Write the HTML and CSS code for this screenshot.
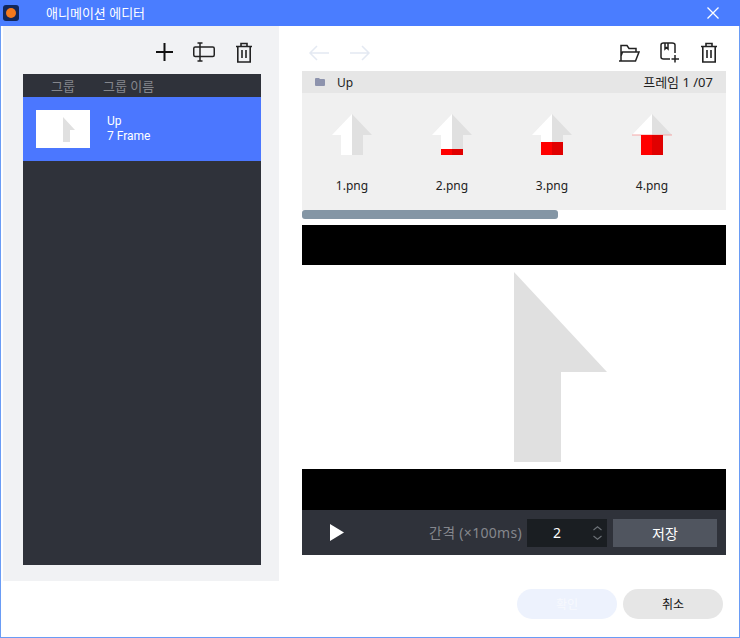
FILE: index.html
```html
<!DOCTYPE html>
<html lang="ko">
<head>
  <meta charset="UTF-8">
  <title>애니메이션 에디터</title>
  <link rel="stylesheet" href="styles.css">
</head>
<body>
  <div class="window">
    <header class="titlebar">
      <div class="app-icon"><span class="app-dot"></span></div>
      <span class="title">애니메이션 에디터</span>
      <svg class="close" width="14" height="14" viewBox="0 0 14 14"><path d="M1.5 1.5l11 11M12.500 1.500l-11 11" stroke="#fff" stroke-width="1.300" fill="none"/></svg>
    </header>

    <div class="main">
      <!-- group list -->
      <aside class="left">
        <div class="left-tools">
          <svg width="20" height="20" viewBox="0 0 20 20"><path d="M9.500 1v18M1 10h17" stroke="#111" stroke-width="2" fill="none"/></svg>
          <svg width="22" height="20" viewBox="0 0 22 20"><rect x=".75" y="5" width="20.500" height="9.500" rx="1.500" fill="none" stroke="#222" stroke-width="1.500"/><path d="M7 1v18M4.500 1h5M4.500 19h5" stroke="#222" stroke-width="1.500" fill="none"/></svg>
          <svg class="left-trash" width="18" height="21" viewBox="0 0 18 21"><path d="M1 4.500h16M6 4V1.500h6V4M2.800 4.500V20h12.400V4.500M7 8v8M11 8v8" stroke="#222" stroke-width="1.600" fill="none"/></svg>
        </div>
        <div class="group-list">
          <div class="group-head">
            <span class="col-group">그룹</span>
            <span class="col-name">그룹 이름</span>
          </div>
          <div class="group-row">
            <div class="group-thumb">
              <svg width="12" height="25" viewBox="0 0 12 25"><path d="M0 0L12 13H7V25H0Z" fill="#e0e0e0"/></svg>
            </div>
            <div class="group-text">Up<br>7 Frame</div>
          </div>
        </div>
      </aside>

      <section class="right">
        <div class="right-tools">
          <svg width="22" height="16" viewBox="0 0 22 16"><path d="M21 8H2M9 1L2 8l7 7" stroke="#e4e9f2" stroke-width="1.500" fill="none"/></svg>
          <svg class="next" width="22" height="16" viewBox="0 0 22 16"><path d="M1 8h19M13 1l7 7-7 7" stroke="#e4e9f2" stroke-width="1.500" fill="none"/></svg>
          <span class="spacer"></span>
          <svg width="22" height="18" viewBox="0 0 22 18"><path d="M3 17V1.500h6l2 3h7V8M1 17h16.500L21 8H4.500L3 12" stroke="#222" stroke-width="1.500" fill="none"/></svg>
          <svg class="add" width="20" height="21" viewBox="0 0 20 21"><path d="M10 17H3.500Q1 17 1 15V3Q1 1 3.500 1H12Q15 1 15 3V11M5 1v6l1.500-1.500L8 7V1M4 1h6M15 13v7.500M11.500 17h7.500" stroke="#222" stroke-width="1.500" fill="none"/></svg>
          <svg class="trash" width="18" height="21" viewBox="0 0 18 21"><path d="M1 4.500h16M6 4V1.500h6V4M2.800 4.500V20h12.400V4.500M7 8v8M11 8v8" stroke="#222" stroke-width="1.600" fill="none"/></svg>
        </div>

        <div class="strip-head">
          <svg width="10" height="8" viewBox="0 0 10 8"><path d="M0 1q0-1 1-1h3l1 1h4q1 0 1 1v5q0 1-1 1H1Q0 8 0 7Z" fill="#8d93ad"/></svg>
          <span class="strip-name">Up</span>
          <span class="strip-count">프레임 1 /07</span>
        </div>

        <div class="frames">
          <div class="frame">
            <svg class="frame-arrow" width="40" height="41" viewBox="0 0 40 41"><path d="M20 0L0 21H9V41H20Z" fill="#fff"/><path d="M20 0L40 21H31V41H20Z" fill="#e0e0e0"/></svg>
            <span>1.png</span>
          </div>
          <div class="frame">
            <svg class="frame-arrow" width="40" height="41" viewBox="0 0 40 41"><path d="M20 0L0 21H9V41H20Z" fill="#fff"/><path d="M20 0L40 21H31V41H20Z" fill="#e0e0e0"/><path d="M9 35H20V41H9Z" fill="#f00"/><path d="M20 35H31V41H20Z" fill="#e00000"/></svg>
            <span>2.png</span>
          </div>
          <div class="frame">
            <svg class="frame-arrow" width="40" height="41" viewBox="0 0 40 41"><path d="M20 0L0 21H9V41H20Z" fill="#fff"/><path d="M20 0L40 21H31V41H20Z" fill="#e0e0e0"/><path d="M9 28H20V41H9Z" fill="#f00"/><path d="M20 28H31V41H20Z" fill="#e00000"/></svg>
            <span>3.png</span>
          </div>
          <div class="frame">
            <svg class="frame-arrow" width="40" height="41" viewBox="0 0 40 41"><path d="M20 0L0 21H9V41H20Z" fill="#fff"/><path d="M20 0L40 21H31V41H20Z" fill="#e0e0e0"/><path d="M0 21H40" stroke="#f5a8a8" stroke-width="1"/><path d="M9 21H20V41H9Z" fill="#f00"/><path d="M20 21H31V41H20Z" fill="#e00000"/></svg>
            <span>4.png</span>
          </div>
        </div>
        <div class="scroll"><div class="scroll-thumb"></div></div>

        <div class="bar-top"></div>
        <div class="preview">
          <svg width="93" height="190" viewBox="0 0 93 190"><path d="M0 0L93 100H47V190H0Z" fill="#e0e0e0"/></svg>
        </div>
        <div class="bar-bottom"></div>

        <div class="controls">
          <svg class="play" width="14" height="17" viewBox="0 0 14 17"><path d="M0 0L14 8.500L0 17Z" fill="#fff"/></svg>
          <span class="spacer"></span>
          <span class="interval">간격 (×100ms)</span>
          <div class="stepper">
            <span class="step-value">2</span>
            <svg width="9" height="14" viewBox="0 0 9 14"><path d="M.5 4L4.500 .8l4 3.200M.5 10l4 3.200 4-3.200" stroke="#6d7278" stroke-width="1.100" fill="none"/></svg>
          </div>
          <button class="save">저장</button>
        </div>
      </section>
    </div>

    <footer class="footer">
      <button class="btn btn-ok">확인</button>
      <button class="btn btn-cancel">취소</button>
    </footer>
  </div>
</body>
</html>
```

FILE: styles.css
```css
* {
  box-sizing: border-box;
}
html, body {
  margin: 0;
  padding: 0;
}
body {
  width: 740px;
  height: 638px;
  overflow: hidden;
  background: #fff;
  font-family: "Noto Sans", "Noto Sans CJK KR", sans-serif;
  font-size: 12px;
}
svg {
  display: block;
  flex: none;
}
.window {
  height: 638px;
  border: 1px solid #6a9cf5;
  border-top: 0;
  display: flex;
  flex-direction: column;
}
.titlebar {
  height: 26px;
  margin: 0 -1px;
  background: #4a7dff;
  color: #fff;
  display: flex;
  align-items: center;
  padding: 0 20px 0 3px;
}
.app-icon {
  width: 16px;
  height: 16px;
  border-radius: 3px;
  background: #12275a;
  display: flex;
  align-items: center;
  justify-content: center;
}
.app-dot {
  width: 10px;
  height: 10px;
  border-radius: 50%;
  background: #f5791c;
}
.title {
  margin-left: 27px;
  flex: 1;
  font-size: 13px;
  line-height: 18px;
}
.main {
  display: flex;
  height: 555px;
}
.left {
  width: 276px;
  margin-left: 2px;
  padding: 0 18px 16px 20px;
  background: #f1f2f4;
  display: flex;
  flex-direction: column;
}
.left-tools {
  height: 48px;
  display: flex;
  align-items: center;
  justify-content: flex-end;
  gap: 18px;
  padding: 4px 8px 0 0;
}
.left-trash {
  margin-left: 2px;
}
.group-list {
  flex: 1;
  background: #2f323a;
}
.group-head {
  height: 23px;
  display: flex;
  align-items: center;
  padding-bottom: 1px;
  color: #85878d;
  font-size: 13px;
}
.col-group {
  margin-left: 28px;
}
.col-name {
  margin-left: 28px;
}
.group-row {
  height: 64px;
  background: #4b77ff;
  display: flex;
  align-items: center;
  padding-left: 13px;
  color: #fff;
}
.group-thumb {
  width: 54px;
  height: 38px;
  background: #fff;
  display: flex;
  align-items: center;
  padding-left: 27px;
}
.group-text {
  margin-left: 17px;
  font-family: Roboto, sans-serif;
  line-height: 15px;
  font-size: 12px;
  margin-top: -1px;
}
.right {
  width: 424px;
  margin-left: 23px;
  display: flex;
  flex-direction: column;
}
.right-tools {
  height: 45px;
  display: flex;
  align-items: center;
  padding: 8px 8px 0 6px;
}
.next {
  margin-left: 19px;
}
.spacer {
  flex: 1;
}
.add {
  margin-left: 20px;
}
.trash {
  margin-left: 20px;
}
.strip-head {
  height: 22px;
  background: #e6e6e6;
  display: flex;
  align-items: center;
  padding: 0 13px 0 13px;
  color: #222;
}
.strip-name {
  margin-left: 12px;
  flex: 1;
}
.strip-count {
  font-size: 13px;
  line-height: 18px;
}
.frames {
  height: 117px;
  background: #f0f0f0;
  display: flex;
}
.frame {
  width: 100px;
  display: flex;
  flex-direction: column;
  align-items: center;
  padding-top: 21px;
  color: #222;
}
.frame span {
  margin-top: 22px;
  line-height: 17px;
}
.scroll {
  height: 9px;
}
.scroll-thumb {
  width: 256px;
  height: 9px;
  border-radius: 3px;
  background: #8496a5;
}
.bar-top {
  margin-top: 6px;
  height: 40px;
  background: #000;
}
.preview {
  height: 204px;
  padding: 7px 0 0 212px;
  background: #fff;
}
.bar-bottom {
  height: 41px;
  background: #000;
}
.controls {
  height: 45px;
  background: #2f323a;
  display: flex;
  align-items: center;
  padding: 0 9px 0 28px;
}
.interval {
  color: #85878d;
  font-size: 14px;
  line-height: 20px;
  letter-spacing: .3px;
  margin-right: 5px;
}
.stepper {
  width: 80px;
  height: 28px;
  background: #1a1e22;
  display: flex;
  align-items: center;
  padding-right: 5px;
  color: #fff;
}
.step-value {
  flex: 1;
  text-align: center;
  font-size: 14px;
  padding-right: 6px;
}
.save {
  width: 104px;
  height: 28px;
  margin-left: 6px;
  border: 0;
  background: #50555f;
  color: #fff;
  font-family: inherit;
  font-size: 14px;
}
.footer {
  flex: 1;
  display: flex;
  justify-content: flex-end;
  align-items: flex-start;
  gap: 6px;
  padding: 8px 16px 0 0;
}
.btn {
  width: 100px;
  height: 30px;
  border: 0;
  border-radius: 15px;
  font-family: inherit;
  font-size: 12px;
}
.btn-ok {
  background: #edf2fd;
  color: #f7f9fe;
}
.btn-cancel {
  background: #e6e6e6;
  color: #111;
}
```
